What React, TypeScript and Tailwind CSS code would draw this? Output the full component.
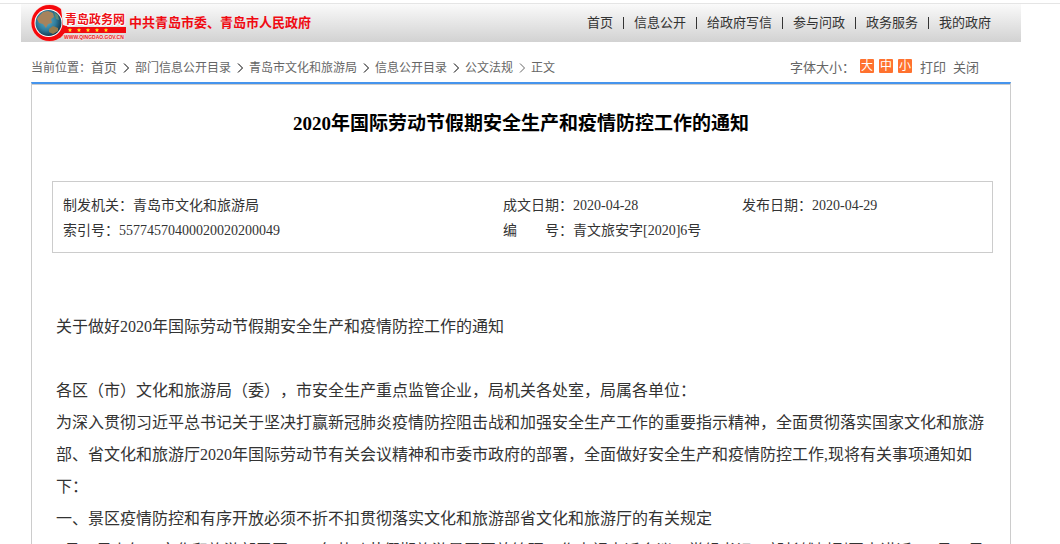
import type { ReactNode } from "react";

const navItems = ["首页", "信息公开", "给政府写信", "参与问政", "政务服务", "我的政府"];
const crumbs = ["部门信息公开目录", "青岛市文化和旅游局", "信息公开目录", "公文法规"];
const sizes = ["大", "中", "小"];
const stars = [39, 48, 57, 66, 75];

function Logo() {
  return (
    <svg viewBox="0 0 96 38" className="h-[38px] w-24 shrink-0" role="img" aria-label="青岛政务网">
      <defs>
        <radialGradient id="sea" cx="42%" cy="42%" r="60%">
          <stop offset="0" stopColor="#62b4cc" />
          <stop offset="0.6" stopColor="#2f7c9c" />
          <stop offset="1" stopColor="#143a50" />
        </radialGradient>
      </defs>
      <circle cx="18.5" cy="19" r="18.5" fill="#ffb5ae" />
      <circle cx="18.5" cy="19" r="18" fill="#f5080c" />
      <path d="M30 4.5 38 11 35 22 32 21Z" fill="#f1f1f1" />
      <path d="M31 23H95V29H33L29 34 24 33Z" fill="#f20a0e" />
      <circle cx="17.5" cy="19" r="14" fill="#fff" />
      <circle cx="17.5" cy="19" r="13" fill="url(#sea)" />
      <path d="m8 12 4-4 5-1 5 2 1 4-3 2 1 4-4 1-2 4-3-4-4-1-2-4Z" fill="#a7835c" />
      <path d="m18 25 4-3 5 2 0 3-5 3-4-2Z" fill="#937b4d" />
      <path d="m23 8 4 3 1 5-3-1Z" fill="#5d8a70" />
      {stars.map((x) => (
        <path key={x} d="m0-2 .6 1.3 1.5.1-1.1 1 .3 1.5L0 1.2l-1.3.7.3-1.5-1.1-1 1.5-.1Z" transform={`translate(${x} 26)`} fill="#ffe51b" />
      ))}
      <text x="34" y="20" fontSize="12" fontWeight="700" fill="#ed1117" stroke="#fff" strokeWidth="2" paintOrder="stroke" className="font-['Noto_Sans_CJK_SC',sans-serif]">青岛政务网</text>
      <text x="33" y="35" fontSize="5" fontWeight="700" fill="#e62024" stroke="#ffe3e1" strokeWidth="1" paintOrder="stroke" className="font-['Liberation_Sans',sans-serif]">WWW.QINGDAO.GOV.CN</text>
    </svg>
  );
}

function Chevron({ className }: { className: string }) {
  return (
    <svg viewBox="0 0 18 12" className={`h-3 w-[18px] ${className}`} fill="none" stroke="currentColor" aria-hidden="true">
      <path d="m7 1.5 4.5 4.5L7 10.500" />
    </svg>
  );
}

function Field({ label, children }: { label: string; children: ReactNode }) {
  return (
    <div className="flex whitespace-pre">
      <dt>{label}：</dt>
      <dd>{children}</dd>
    </div>
  );
}

export default function App() {
  return (
    <div className="h-screen overflow-hidden bg-white font-['Liberation_Serif','Noto_Sans_CJK_SC',sans-serif] text-[#333] [text-spacing-trim:space-all]">
      <div className="h-1 border-b border-[#e5e5e5]" />
      <div className="mr-[39px] ml-[21px]">
        <header className="flex h-[38px] items-center justify-between bg-linear-to-b from-[#fafafa] to-[#d2d2d2] pr-[30px] pl-[10px]">
          <a href="#home" className="flex items-center gap-0.5">
            <Logo />
            <strong className="text-[13px] whitespace-nowrap text-[#f00a12]">中共青岛市委、青岛市人民政府</strong>
          </a>
          <nav className="flex items-center text-[13px]">
            {navItems.map((item, i) => (
              <span key={item} className="flex items-center">
                {i > 0 && <span className="mx-[10px] h-3 w-px bg-[#333]" />}
                <a href="#nav">{item}</a>
              </span>
            ))}
          </nav>
        </header>
        <main className="mx-[10px]">
          <div className="flex h-10 items-center justify-between pt-3 text-xs text-[#666]">
            <nav className="flex items-center whitespace-nowrap">
              <span>当前位置：</span>
              <a href="#home" className="text-[13px]">首页</a>
              {crumbs.map((item) => (
                <span key={item} className="flex items-center">
                  <Chevron className="text-black" />
                  <a href="#crumb">{item}</a>
                </span>
              ))}
              <Chevron className="text-[#666]" />
              <span>正文</span>
            </nav>
            <div className="flex items-center pr-8 text-[13px]">
              <span className="mr-[5px]">字体大小：</span>
              <div className="flex gap-[5px] pb-1">
                {sizes.map((s) => (
                  <button key={s} className="flex size-[14px] items-center justify-center rounded-[1px] bg-[#ff722f] text-xs leading-[14px] text-white">{s}</button>
                ))}
              </div>
              <button className="ml-2">打印</button>
              <button className="ml-[7px]">关闭</button>
            </div>
          </div>
          <article className="border-x border-t-2 border-x-[#ccc] border-t-[#4594ed]">
            <div className="border-t border-[#ccc] px-5">
              <h1 className="pt-[25px] text-center text-[19px] leading-7 font-bold text-black">2020年国际劳动节假期安全生产和疫情防控工作的通知</h1>
              <dl className="mt-[43px] mr-[-3px] grid grid-cols-[440px_239px_1fr] border border-[#ccc] px-[10px] pt-[11px] pb-[9px] text-sm leading-[25px]">
                <Field label="制发机关">青岛市文化和旅游局</Field>
                <Field label="成文日期">2020-04-28</Field>
                <Field label="发布日期">2020-04-29</Field>
                <Field label="索引号">55774570400020020200049</Field>
                <Field label="编　　号">青文旅安字[2020]6号</Field>
              </dl>
              <div className="mt-[58px] px-1 text-base leading-8">
                <p>关于做好2020年国际劳动节假期安全生产和疫情防控工作的通知</p>
                <p className="mt-8">各区（市）文化和旅游局（委），市安全生产重点监管企业，局机关各处室，局属各单位：</p>
                <p>为深入贯彻习近平总书记关于坚决打赢新冠肺炎疫情防控阻击战和加强安全生产工作的重要指示精神，全面贯彻落实国家文化和旅游部、省文化和旅游厅2020年国际劳动节有关会议精神和市委市政府的部署，全面做好安全生产和疫情防控工作,现将有关事项通知如下：</p>
                <p>一、景区疫情防控和有序开放必须不折不扣贯彻落实文化和旅游部省文化和旅游厅的有关规定</p>
                <p>4月13日上午，文化和旅游部召开2020年劳动节假期旅游景区开放管理工作电视电话会议，党组书记、部长雒树刚同志讲话。4月17日</p>
              </div>
            </div>
          </article>
        </main>
      </div>
    </div>
  );
}
